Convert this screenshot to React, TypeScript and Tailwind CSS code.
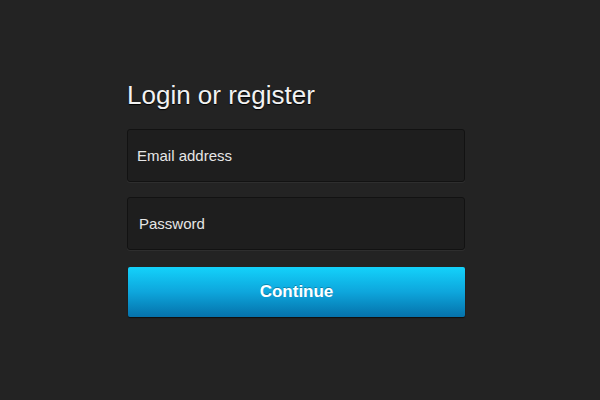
export default function App() {
  return (
    <div className="w-[600px] h-[400px] bg-[#232323] flex justify-center" style={{ fontFamily: '"Liberation Sans", Arial, sans-serif' }}>
      <div className="w-[338px] pt-[80px] ml-[-8px] flex flex-col">
        <h1 className="text-[26px] leading-[30px] text-[#f2f2f2] mb-[19px] [text-shadow:0_1px_1px_#000]">Login or register</h1>
        <div className="h-[53px] rounded-[3px] bg-[#1e1e1e] border border-[#121212] shadow-[0_1px_0_#2e2e2e] flex items-center pl-[9px] pt-[2px] text-[15px] text-[#e6e6e6]">
          Email address
        </div>
        <div className="h-[53px] mt-[15px] rounded-[3px] bg-[#1e1e1e] border border-[#121212] shadow-[0_1px_0_#2e2e2e] flex items-center pl-[11px] pt-[2px] text-[15px] text-[#e6e6e6]">
          Password
        </div>
        <button className="h-[50px] mt-[17px] ml-[1px] w-[337px] rounded-[2px] bg-gradient-to-b from-[#14d2fb] via-[#0ea6dc] to-[#0672ab] shadow-[0_1px_1px_rgba(0,0,0,0.6)] text-white font-bold text-[17px] [text-shadow:0_-1px_0_rgba(0,0,0,0.25)]">
          Continue
        </button>
      </div>
    </div>
  );
}
